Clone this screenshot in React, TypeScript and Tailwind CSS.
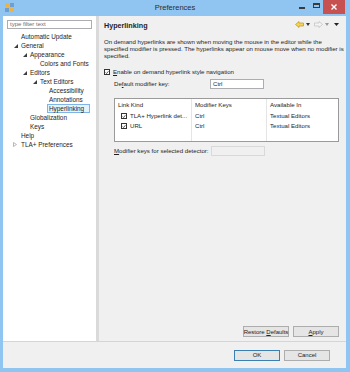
import React from "react";

const font = { fontFamily: '"Liberation Sans", Arial, sans-serif' };

type TreeItem = { label: string; x: number; tri?: "open" | "closed"; selected?: boolean };

const tree: TreeItem[] = [
  { label: "Automatic Update", x: 20 },
  { label: "General", x: 20, tri: "open" },
  { label: "Appearance", x: 29, tri: "open" },
  { label: "Colors and Fonts", x: 39 },
  { label: "Editors", x: 29, tri: "open" },
  { label: "Text Editors", x: 39, tri: "open" },
  { label: "Accessibility", x: 48 },
  { label: "Annotations", x: 48 },
  { label: "Hyperlinking", x: 47, selected: true },
  { label: "Globalization", x: 29 },
  { label: "Keys", x: 29 },
  { label: "Help", x: 20 },
  { label: "TLA+ Preferences", x: 20, tri: "closed" },
];

function Tri({ kind }: { kind: "open" | "closed" }) {
  if (kind === "open") {
    return (
      <svg width="4" height="4" viewBox="0 0 4 4" className="absolute -left-[6px] top-[3px]">
        <polygon points="4,0 4,4 0,4" fill="#3c3c3c" />
      </svg>
    );
  }
  return (
    <svg width="4" height="5" viewBox="0 0 4 5" className="absolute -left-[7px] top-[2px]">
      <polygon points="0.5,0.5 3.5,2.5 0.5,4.5" fill="none" stroke="#a6a6a6" strokeWidth="0.8" />
    </svg>
  );
}

function Check() {
  return (
    <span className="inline-flex h-[6px] w-[6px] shrink-0 items-center justify-center border border-[#333] bg-white">
      <svg width="5" height="5" viewBox="0 0 5 5">
        <polyline points="0.8,2.5 2,3.8 4.3,0.9" fill="none" stroke="#222" strokeWidth="0.9" />
      </svg>
    </span>
  );
}

function Btn({ children, primary }: { children: React.ReactNode; primary?: boolean }) {
  return (
    <div
      className={
        "flex h-[11px] w-[46px] items-center justify-center border bg-[#e5e5e5] text-[6px] leading-[8px] text-[#222] " +
        (primary ? "border-[#3c7fb1]" : "border-[#adadad]")
      }
    >
      <span>{children}</span>
    </div>
  );
}

export default function App() {
  return (
    <div className="flex h-[372px] w-[350px] flex-col whitespace-nowrap bg-[#90c4f1] text-[#1e1e1e]" style={font}>
      {/* Title bar */}
      <div className="relative flex h-[16px] items-center justify-center">
        <div className="absolute left-[5px] top-[3px] grid h-[9px] w-[9px] grid-cols-2 gap-[1px]">
          <span className="bg-[#e8b44a]" />
          <span className="bg-[#6e9fd4]" />
          <span className="bg-[#6e9fd4]" />
          <span className="bg-[#e8b44a]" />
        </div>
        <span className="text-[7.5px] leading-[10px] text-[#2d2d2d]">Preferences</span>
        <div className="absolute left-[299px] top-[7px] h-[1.5px] w-[6px] bg-[#3a3a3a]" />
        <div className="absolute left-[313px] top-[3px] h-[5px] w-[7px] border border-t-2 border-[#3a3a3a]" />
        <div className="absolute right-[5px] top-0 flex h-[14px] w-[22px] items-center justify-center bg-[#c75050]">
          <svg width="6" height="6" viewBox="0 0 6 6">
            <path d="M0.5 0.5 L5.5 5.5 M5.5 0.5 L0.5 5.5" stroke="white" strokeWidth="1.4" />
          </svg>
        </div>
      </div>

      {/* Body */}
      <div className="ml-[3px] mr-[4px] mb-[4px] flex flex-1 flex-col bg-[#f0f0f0]">
        <div className="flex h-[325px]">
          {/* Tree */}
          <div className="w-[93px] shrink-0 bg-white pt-[4px]">
            <div className="ml-[4px] flex h-[9px] w-[85px] items-center border border-[#abadb3] bg-white px-[2px] text-[6px] leading-[7px] text-[#6d6d6d]">
              type filter text
            </div>
            <div className="mt-[3px] text-[6.4px] leading-[9px]">
              {tree.map((t) => (
                <div key={t.label} className="relative flex h-[9px] items-center" style={{ marginLeft: t.x - 3 }}>
                  <span
                    className={
                      "relative inline-block px-[1px] " +
                      (t.selected ? "border border-[#7eb4ea] bg-[#e5f3fb] pr-[5px] leading-[7px]" : "")
                    }
                  >
                    {t.tri && <Tri kind={t.tri} />}
                    {t.label}
                  </span>
                </div>
              ))}
            </div>
          </div>

          {/* Sash */}
          <div className="w-[3px] shrink-0 bg-[#dadada]" />

          {/* Page */}
          <div className="flex min-w-0 flex-1 flex-col overflow-hidden px-[5px] pb-[4px] text-[6.1px] leading-[8px]">
            <div className="flex h-[15px] items-end justify-between pb-[1px]">
              <span className="text-[7.2px] font-bold leading-[9px]">Hyperlinking</span>
              <div className="mb-[2px] mr-[2px] flex items-center gap-[2px]">
                <svg width="9" height="7" viewBox="0 0 9 7">
                  <polygon points="0.5,3.5 4,0.5 4,2 8.5,2 8.5,5 4,5 4,6.5" fill="#f5d452" stroke="#b8860b" strokeWidth="0.6" />
                </svg>
                <svg width="4" height="3" viewBox="0 0 4 3"><polygon points="0,0 4,0 2,3" fill="#333" /></svg>
                <svg width="9" height="7" viewBox="0 0 9 7" className="ml-[2px]">
                  <polygon points="8.5,3.5 5,0.5 5,2 0.5,2 0.5,5 5,5 5,6.5" fill="#f4f4f4" stroke="#b5b5b5" strokeWidth="0.6" />
                </svg>
                <svg width="4" height="3" viewBox="0 0 4 3"><polygon points="0,0 4,0 2,3" fill="#999" /></svg>
                <svg width="5" height="3" viewBox="0 0 5 3" className="ml-[3px]"><polygon points="0,0 5,0 2.5,3" fill="#222" /></svg>
              </div>
            </div>

            <div className="mt-[7px] leading-[7px]">
              On demand hyperlinks are shown when moving the mouse in the editor while the
              <br />
              specified modifier is pressed. The hyperlinks appear on mouse move when no modifier is
              <br />
              specified.
            </div>

            <div className="mt-[9px] flex h-[8px] items-center gap-[3px]">
              <Check />
              <span>
                <u>E</u>nable on demand hyperlink style navigation
              </span>
            </div>

            <div className="mt-[3px] flex items-center pl-[10px]">
              <span className="w-[96px]">
                De<u>f</u>ault modifier key:
              </span>
              <div className="flex h-[10px] w-[54px] items-center border border-[#abadb3] bg-white px-[2px]">Ctrl</div>
            </div>

            {/* Table */}
            <div className="ml-[10px] mr-[2px] mt-[9px] border border-[#9a9a9a] bg-white">
              <div className="grid h-[12px] grid-cols-[77px_75px_1fr] items-center">
                <span className="flex h-full items-center border-r border-[#e5e5e5] pl-[3px]">Link Kind</span>
                <span className="flex h-full items-center border-r border-[#e5e5e5] pl-[3px]">Modifier Keys</span>
                <span className="pl-[3px]">Available In</span>
              </div>
              {[
                { k: "TLA+ Hyperlink det...", m: "Ctrl", a: "Textual Editors" },
                { k: "URL", m: "Ctrl", a: "Textual Editors" },
                { k: "", m: "", a: "" },
              ].map((r, i) => (
                <div key={i} className="grid h-[10px] grid-cols-[77px_75px_1fr] items-center">
                  <span className="flex h-full items-center gap-[3px] overflow-hidden border-r border-[#e5e5e5] pl-[6px]">
                    {r.k && <Check />}
                    <span>{r.k}</span>
                  </span>
                  <span className="flex h-full items-center border-r border-[#e5e5e5] pl-[3px]">{r.m}</span>
                  <span className="pl-[3px]">{r.a}</span>
                </div>
              ))}
            </div>

            <div className="mt-[4px] flex items-center pl-[10px]">
              <span className="w-[97px]">
                <u>M</u>odifier keys for selected detector:
              </span>
              <div className="h-[10px] w-[54px] border border-[#d9d9d9] bg-[#f0f0f0]" />
            </div>

            <div className="mt-auto flex justify-end gap-[4px] pr-[2px]">
              <Btn>
                Restore <u>D</u>efaults
              </Btn>
              <Btn>
                <u>A</u>pply
              </Btn>
            </div>
          </div>
        </div>

        <div className="h-px bg-[#d5d5d5]" />
        <div className="flex flex-1 items-center justify-end gap-[4px] pr-[16px]">
          <Btn primary>OK</Btn>
          <Btn>Cancel</Btn>
        </div>
      </div>
    </div>
  );
}
